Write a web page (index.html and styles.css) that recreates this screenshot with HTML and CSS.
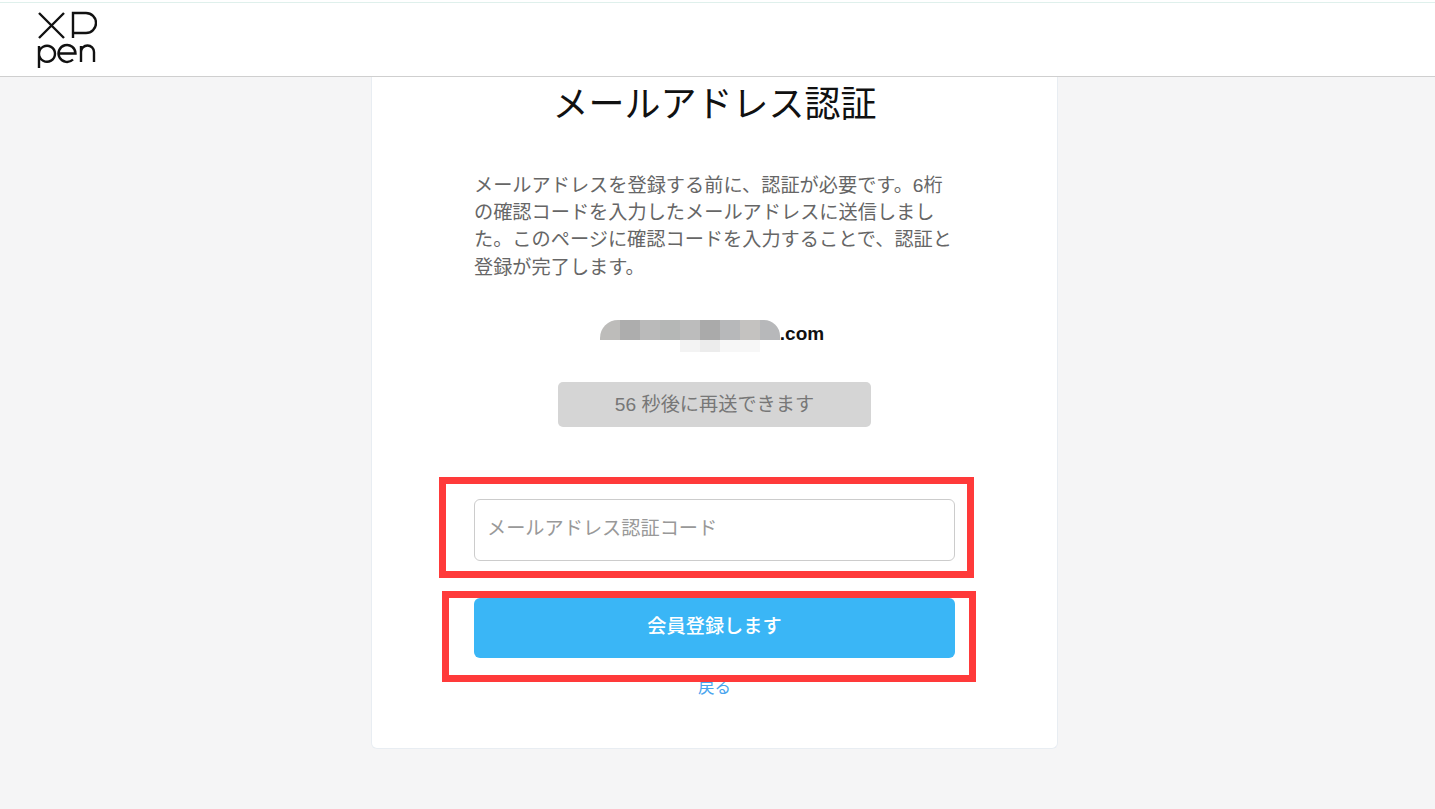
FILE: index.html
```html
<!DOCTYPE html>
<html lang="ja">

<head>
    <meta charset="UTF-8">
    <title>メールアドレス認証</title>
    <link rel="stylesheet" href="styles.css">
</head>

<body>
    <header class="topbar">
        <a href="#" class="logo">
            <svg width="60" height="60" viewBox="0 0 60 60" fill="none" stroke="#111" stroke-width="2.4">
                <path d="M2 4 L27 29 M27 4 L2 29" />
                <path d="M36 29 V4 H49 A10 10 0 0 1 49 24 H36" />
                <path d="M2 59 V37 M2 44.500 A8 8 0 1 1 2 45" />
                <path d="M21.500 44.500 H38.500 A8.500 8.500 0 1 0 36 50.500" />
                <path d="M44 53 V37 M44 43 A6.500 6.500 0 0 1 57 43 V53" />
            </svg>
        </a>
    </header>

    <main class="page">
        <div class="card">
            <h1 class="title">メールアドレス認証</h1>
            <p class="intro">メールアドレスを登録する前に、認証が必要です。6桁の確認コードを入力したメールアドレスに送信しました。このページに確認コードを入力することで、認証と登録が完了します。</p>

            <div class="email">
                <div class="mosaic">
                    <div class="mosaic-row">
                        <span class="m1 first"></span><span class="m2"></span><span class="m3"></span><span class="m4"></span><span class="m8"></span><span class="m5"></span><span class="m6"></span><span class="m7"></span><span class="m6 last"></span>
                    </div>
                    <div class="mosaic-row lower">
                        <span class="l1"></span><span class="l2"></span><span class="l3"></span><span class="l3"></span>
                    </div>
                </div>
                <span class="email-end">.com</span>
            </div>

            <button class="resend" disabled>56 秒後に再送できます</button>

            <form class="form">
                <input class="code" type="text" placeholder="メールアドレス認証コード">
                <button class="submit" type="button">会員登録します</button>
            </form>
            <a href="#" class="back">戻る</a>
        </div>
    </main>

    <!-- annotation boxes over the screenshot -->
    <div class="mark mark-input"></div>
    <div class="mark mark-button"></div>
</body>

</html>
```

FILE: styles.css
```css
* {
    margin: 0;
    padding: 0;
    box-sizing: border-box;
    font-family: "Liberation Sans", Arial, "Noto Sans CJK JP", sans-serif;
}

body {
    background: #f5f5f6;
    color: #111;
    height: 809px;
    overflow: hidden;
}

.topbar {
    height: 77px;
    background: linear-gradient(#fff 2px, #dff0ec 2px, #dff0ec 3px, #fff 3px);
    border-bottom: 1px solid #cfcfcf;
    padding: 9px 0 0 37px;
}

.logo {
    display: block;
    width: 60px;
}

.logo svg {
    display: block;
}

.page {
    display: flex;
    justify-content: center;
    padding-right: 6px;
}

.card {
    width: 687px;
    height: 672px;
    padding-top: 2px;
    background: #fff;
    border: 1px solid #e8edf2;
    border-top: none;
    border-radius: 0 0 6px 6px;
    display: flex;
    flex-direction: column;
    align-items: center;
}

.title {
    font-size: 36px;
    font-weight: 400;
    line-height: 52px;
    color: #111;
}

.intro {
    width: 481px;
    margin-top: 40.500px;
    font-size: 19.200px;
    line-height: 27.400px;
    color: #666;
}

.email {
    margin-top: 38.500px;
    margin-right: 5px;
    height: 32px;
    display: flex;
    font-size: 19px;
    font-weight: 700;
    color: #111;
}

.email-end {
    line-height: 27px;
}

.mosaic {
    width: 180px;
}

.mosaic-row {
    display: flex;
    height: 20px;
}

.mosaic-row span {
    width: 20px;
}

.mosaic-row.lower {
    height: 12px;
    padding-left: 80px;
}

.m1 { background: #bdbcba; }
.m2 { background: #adadad; }
.m3 { background: #bababa; }
.m4 { background: #b5b7b6; }
.m5 { background: #aaaaaa; }
.m6 { background: #b7b8ba; }
.m7 { background: #c4c2c0; }
.m8 { background: #bcbcbc; }
.first { border-top-left-radius: 18px; }
.last { border-top-right-radius: 16px; }
.l1 { background: #f3f3f3; }
.l2 { background: #ececec; }
.l3 { background: #f7f7f7; }

.resend {
    margin-top: 30px;
    width: 313px;
    height: 45px;
    padding-bottom: 2px;
    background: #d5d5d5;
    border: none;
    border-radius: 5px;
    font-size: 19.200px;
    color: #777;
}

.form {
    margin-top: 72px;
    width: 481px;
    display: flex;
    flex-direction: column;
    gap: 37px;
}

.code {
    height: 62px;
    border: 1px solid #ccc;
    border-radius: 6px;
    padding: 0 12px 2px;
    font-size: 19.200px;
    outline: none;
}

.code::placeholder {
    color: #999;
}

.submit {
    height: 60px;
    padding-bottom: 6px;
    background: #3ab6f6;
    color: #fff;
    border: none;
    border-radius: 6px;
    font-size: 19.200px;
    font-weight: 500;
}

.back {
    margin-top: 18px;
    font-size: 16.500px;
    line-height: 22px;
    color: #4aa5ee;
    text-decoration: none;
}

.mark {
    position: absolute;
    border: 7px solid #ff3a3a;
}

.mark-input {
    left: 439px;
    top: 477px;
    width: 535px;
    height: 101px;
}

.mark-button {
    left: 442px;
    top: 591px;
    width: 534px;
    height: 91px;
}
```
